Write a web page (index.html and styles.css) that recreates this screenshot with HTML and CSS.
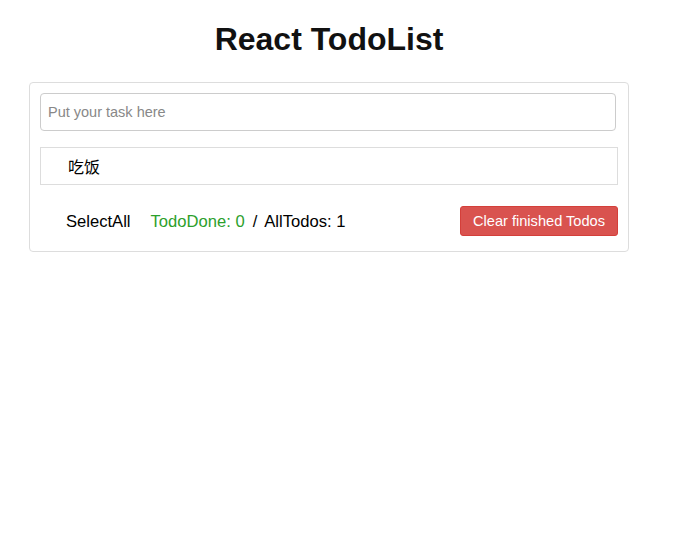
FILE: index.html
```html
<!DOCTYPE html>
<html>
<head>
<meta charset="utf-8">
<link rel="stylesheet" href="styles.css">
</head>
<body>
<div class="app">
  <h1 class="title">React TodoList</h1>
  <div class="panel">
    <input class="task-input" type="text" placeholder="Put your task here">
    <ul class="todo-list">
      <li class="todo-item"><span class="todo-text">吃饭</span></li>
    </ul>
    <div class="footer">
      <span class="select-all">SelectAll</span>
      <span class="done">TodoDone: 0</span>
      <span class="sep">/</span>
      <span class="all">AllTodos: 1</span>
      <button class="clear-btn">Clear finished Todos</button>
    </div>
  </div>
</div>
</body>
</html>
```

FILE: styles.css
```css
html, body {
  margin: 0;
  padding: 0;
  background: #fff;
}
body {
  font-family: "Liberation Sans", "Noto Sans CJK SC", sans-serif;
  color: #000;
}
.app {
  width: 600px;
  margin-left: 29px;
}
.title {
  margin: 0;
  padding-top: 22px;
  height: 82px;
  box-sizing: border-box;
  text-align: center;
  font-size: 32px;
  font-weight: bold;
  line-height: 35px;
  color: #111;
}
.panel {
  border: 1px solid #ddd;
  border-radius: 4px;
  padding: 10px 10px 15px 10px;
  box-sizing: border-box;
  height: 170px;
}
.task-input {
  display: block;
  width: 576px;
  height: 38px;
  box-sizing: border-box;
  border: 1px solid #ccc;
  border-radius: 4px;
  padding: 0 7px;
  font-family: inherit;
  font-size: 14.5px;
  color: #555;
  outline: none;
}
.task-input::placeholder {
  color: #888;
}
.todo-list {
  list-style: none;
  margin: 16px 0 0 0;
  padding: 0;
}
.todo-item {
  width: 578px;
  height: 38px;
  box-sizing: border-box;
  border: 1px solid #ddd;
  display: flex;
  align-items: center;
  padding-left: 27px;
  font-size: 16px;
}
.footer {
  margin-top: 21px;
  width: 578px;
  height: 30px;
  display: flex;
  align-items: center;
  font-size: 16.6px;
}
.footer span {
  margin-top: 2px;
}
.select-all {
  margin-left: 26px;
}
.done {
  margin-left: 20px;
  color: #2ca02c;
}
.sep {
  margin-left: 8px;
  margin-right: 7px;
}
.clear-btn {
  margin-left: auto;
  height: 30px;
  padding: 0;
  background: #d9534f;
  border: 1px solid #d43f3a;
  border-radius: 3px;
  color: #fff;
  font-family: inherit;
  font-size: 14.6px;
  width: 158px;
}
```
